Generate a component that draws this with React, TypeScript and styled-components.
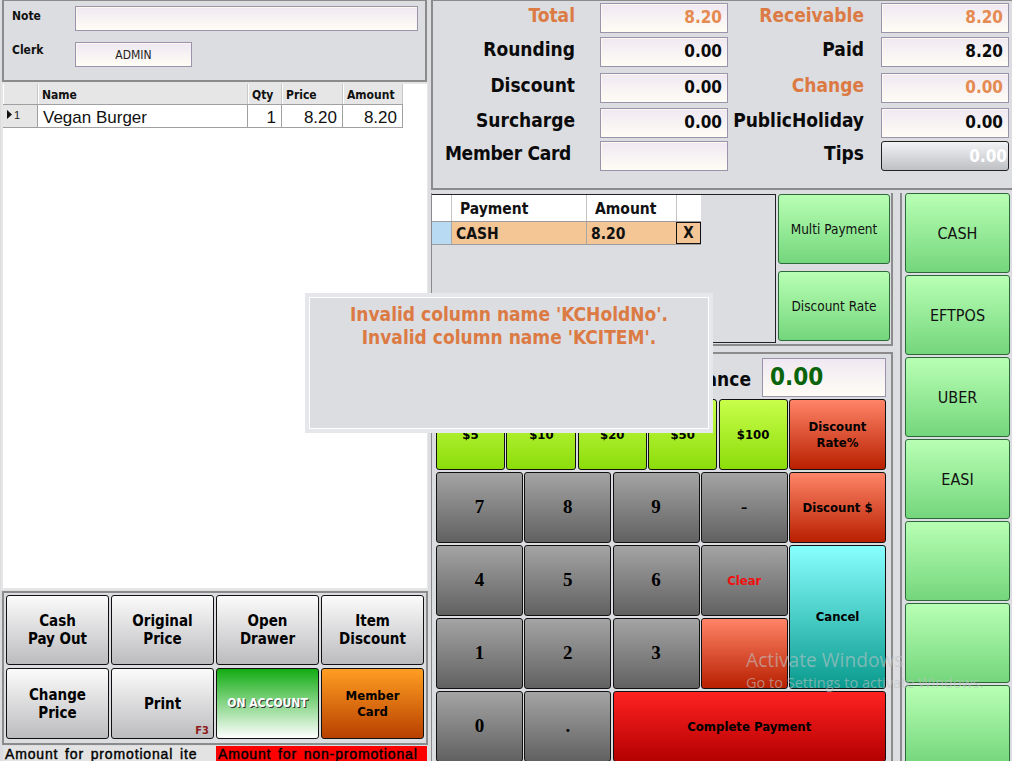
import React from "react";
import styled, { createGlobalStyle } from "styled-components";

const FONT = `"DejaVu Sans Condensed", "DejaVu Sans", sans-serif`;

const Global = createGlobalStyle`
  html, body { margin: 0; padding: 0; background: #fff; }
  body { font-family: ${FONT}; }
  * { box-sizing: border-box; }
`;

const Page = styled.div`
  position: relative;
  width: 1012px;
  height: 761px;
  overflow: hidden;
  display: grid;
  grid-template-columns: 429px 583px;
  background: #fff;
`;

const LeftColumn = styled.div`
  display: flex;
  flex-direction: column;
  height: 761px;
  background: #dcdde1;
`;

const NotePanel = styled.div`
  height: 82px;
  margin-left: 2px;
  margin-right: 2px;
  border: 2px solid #8b8b8b;
  border-top: 1px solid #8b8b8b;
  background: #dcdde1;
  display: grid;
  grid-template-columns: 69px 343px;
  grid-template-rows: 25px 25px;
  row-gap: 11px;
  padding: 5px 8px 0 2px;
`;

const FieldLabel = styled.div<{ $mt?: number }>`
  padding: 3px 0 0 6px;
  margin-top: ${(p) => p.$mt ?? 0}px;
  font-size: 12px;
  font-weight: 700;
  color: #111;
`;

const Field = styled.div<{ $w?: number }>`
  width: ${(p) => (p.$w ? `${p.$w}px` : "100%")};
  border: 1px solid #9a93ac;
  background: linear-gradient(#efe8f2, #fffdf5);
  box-shadow: inset 1px 1px 0 #fff8ee;
  display: flex;
  align-items: center;
  justify-content: center;
  font-size: 12px;
  color: #222;
`;

const OrderGrid = styled.div`
  flex: 1;
  margin: 0 0 0 1px;
  width: 427px;
  background: #fff;
  border: 2px solid #e6e6e6;
  border-right: 1px solid #e6e6e6;
`;

const OrderHeader = styled.div`
  display: grid;
  grid-template-columns: 35px 210px 34px 61px 60px;
  width: 400px;
  height: 21px;
  background: #e6e6e6;
  border-bottom: 1px solid #a0a0a0;
`;

const HeaderCell = styled.div`
  padding: 4px 0 0 3px;
  font-size: 12px;
  font-weight: 700;
  color: #111;
  border-left: 1px solid #fff;
  box-shadow: inset -1px 0 0 #c8c8c8;
  white-space: nowrap;
`;

const OrderRow = styled.div`
  display: grid;
  grid-template-columns: 35px 210px 34px 61px 60px;
  grid-template-rows: 22px;
  width: 400px;
  height: 23px;
  border-bottom: 1px solid #a0a0a0;
`;

const RowMarker = styled.div`
  background: #e6e6e6;
  border-right: 1px solid #a0a0a0;
  display: flex;
  align-items: center;
  padding: 0 0 3px 4px;
  gap: 2px;
  font-family: "Liberation Sans", sans-serif;
  font-size: 11px;
  color: #222;
`;

const Cell = styled.div<{ $right?: boolean }>`
  font-family: "Liberation Sans", sans-serif;
  font-size: 17px;
  line-height: 25px;
  height: 22px;
  overflow: hidden;
  color: #111;
  padding: 0 5px;
  text-align: ${(p) => (p.$right ? "right" : "left")};
  border-right: 1px solid #a0a0a0;
`;

const ActionPanel = styled.div`
  height: 154px;
  margin: 1px 1px 0 2px;
  border: 2px solid #8b8b8b;
  padding: 2px 2px 0 2px;
  display: grid;
  grid-template-columns: repeat(4, 103px);
  grid-template-rows: 70px 71px;
  column-gap: 2px;
  row-gap: 3px;
  background: #dcdde1;
`;

const Key = styled.div<{ $bg: string; $color?: string; $size?: number; $serif?: boolean }>`
  position: relative;
  display: flex;
  align-items: center;
  justify-content: center;
  text-align: center;
  border: 1px solid #111;
  border-radius: 3px;
  background: ${(p) => p.$bg};
  color: ${(p) => p.$color ?? "#000"};
  font-family: ${(p) => (p.$serif ? `"Liberation Serif", serif` : FONT)};
  font-size: ${(p) => p.$size ?? 13}px;
  font-weight: 700;
  line-height: 1.2;
`;

const GREY = "linear-gradient(#fbfbfb, #bcbcbf)";
const DARK = "linear-gradient(#a4a4a4, #616161)";
const LIME = "linear-gradient(#c8ff4a, #8cdc0a)";
const CORAL = "linear-gradient(#ff8468, #b82000)";
const MINT = "linear-gradient(#b8ffb4, #74d67c)";

const OnAccount = styled(Key)`
  color: #fff;
  text-shadow: 1px 1px 0 #333;
  font-size: 12px;
`;

const FKey = styled.span`
  position: absolute;
  right: 4px;
  bottom: 1px;
  font-size: 11px;
  color: #8c1a1a;
`;

const StatusBar = styled.div`
  margin: 1px 1px 0 3px;
  height: 15px;
  display: grid;
  grid-template-columns: 213px 211px;
  font-family: "Liberation Sans", sans-serif;
  font-size: 14px;
  line-height: 16px;
  white-space: nowrap;
  overflow: hidden;
  background: #e3e3e3;
`;

const StatusCell = styled.div<{ $bg?: string }>`
  overflow: hidden;
  padding-left: 2px;
  letter-spacing: 0.85px;
  word-spacing: 2px;
  -webkit-text-stroke: 0.4px #000;
  background: ${(p) => p.$bg ?? "#e3e3e3"};
  color: #000;
`;

const RightColumn = styled.div`
  display: flex;
  flex-direction: column;
  height: 761px;
  background: #dcdde1;
  padding-left: 2px;
`;

const TotalsPanel = styled.div`
  height: 190px;
  border: 2px solid #8b8b8b;
  border-right: none;
  border-top: 1px solid #8b8b8b;
  display: grid;
  grid-template-columns: 167px 128px 153px 128px;
  column-gap: 0;
  grid-template-rows: 30px 30px 30px 30px 30px;
  padding-top: 2px;
  align-content: start;
  row-gap: 4px;
  background: #dcdde1;
`;

const TotalLabel = styled.div<{ $accent?: boolean; $mt?: number }>`
  font-size: 19px;
  font-weight: 700;
  color: ${(p) => (p.$accent ? "#dc7a44" : "#0a0a0a")};
  text-align: right;
  padding-right: 25px;
  white-space: nowrap;
  line-height: 24px;
  margin-top: ${(p) => p.$mt ?? 0}px;
`;

const SecondLabel = styled(TotalLabel)`
  padding-right: 17px;
`;

const MemberLabel = styled(TotalLabel)`
  padding-right: 29px;
  letter-spacing: -0.3px;
`;

const TotalValue = styled.div<{ $accent?: boolean; $mt?: number }>`
  border: 1px solid #9a93ac;
  background: linear-gradient(#efe8f2, #fffdf5);
  box-shadow: inset 1px 1px 0 #fff8ee;
  color: ${(p) => (p.$accent ? "#e58a50" : "#0a0a0a")};
  font-size: 17px;
  font-weight: 700;
  text-align: right;
  line-height: 27px;
  padding-right: 5px;
  margin-top: ${(p) => p.$mt ?? 0}px;
  height: 30px;
`;

const TipsValue = styled.div<{ $mt?: number }>`
  border: 1px solid #222;
  border-radius: 3px;
  background: linear-gradient(#f2f3f5, #bfc0c4);
  color: #fff;
  font-size: 17px;
  font-weight: 700;
  text-align: right;
  line-height: 28px;
  padding-right: 1px;
  height: 30px;
  margin-top: ${(p) => p.$mt ?? 0}px;
`;

const Lower = styled.div`
  display: grid;
  grid-template-columns: 462px 7px 1fr;
  padding-top: 3px;
  flex: 1;
  min-height: 0;
`;

const MidStack = styled.div`
  display: flex;
  flex-direction: column;
`;

const PaymentPanel = styled.div`
  height: 153px;
  border: 2px solid #8b8b8b;
  border-left: 1px solid #8b8b8b;
  border-top: none;
  display: grid;
  grid-template-columns: 344px 112px;
  column-gap: 2px;
  padding-top: 1px;
`;

const PaymentBox = styled.div`
  border: 1px solid #222;
  border-left: none;
  height: 149px;
`;

const PaymentHeader = styled.div`
  display: grid;
  grid-template-columns: 19px 135px 90px 25px;
  grid-template-rows: 26px;
  width: 269px;
  height: 26px;
  background: #fff;
  font-size: 15.5px;
  font-weight: 700;
  color: #111;
  line-height: 28px;
`;

const PayHeadCell = styled.div`
  padding-left: 8px;
  height: 26px;
  overflow: hidden;
  border-left: 1px solid #c4c4c4;
`;

const PaymentRow = styled.div`
  display: grid;
  grid-template-columns: 19px 135px 90px 25px;
  grid-template-rows: 22px;
  width: 269px;
  height: 24px;
  background: #f4c595;
  border-top: 1px solid #9c9c9c;
  border-bottom: 1px solid #9c9c9c;
  font-size: 15.5px;
  font-weight: 700;
  color: #111;
  line-height: 24px;
`;

const PayMarker = styled.div`
  background: #b8daf2;
`;

const PayCell = styled.div`
  padding-left: 4px;
  height: 22px;
  overflow: hidden;
  border-left: 1px solid #a8a8a8;
`;

const RemoveCell = styled.div`
  border: 1px solid #111;
  text-align: center;
  font-size: 15px;
  height: 22px;
  line-height: 21px;
  overflow: hidden;
`;

const SideButtons = styled.div`
  display: grid;
  grid-template-rows: 70px 70px;
  row-gap: 7px;
`;

const SoftKey = styled(Key)`
  font-weight: 400;
  font-size: 13.5px;
  color: #111;
  border: 1px solid #2c6a3a;
`;

const KeypadPanel = styled.div`
  margin-top: 6px;
  flex: 1;
  border: 2px solid #8b8b8b;
  border-left: 1px solid #8b8b8b;
  border-bottom: none;
  padding: 3px 5px 0 4px;
`;

const BalanceRow = styled.div`
  display: flex;
  justify-content: flex-end;
  align-items: center;
  height: 40px;
  gap: 11px;
`;

const BalanceLabel = styled.div`
  font-size: 19px;
  font-weight: 700;
  color: #0a0a0a;
  padding-top: 3px;
`;

const BalanceValue = styled.div`
  width: 124px;
  height: 39px;
  border: 1px solid #9a93ac;
  background: linear-gradient(#efe8f2, #fffdf5);
  color: #0a640a;
  font-size: 24px;
  font-weight: 700;
  line-height: 37px;
  padding-left: 7px;
`;

const PresetRow = styled.div`
  display: grid;
  grid-template-columns: 69px 70px 69px 69px 69px 97px;
  column-gap: 1.4px;
  height: 71px;
  margin-top: 2px;
`;

const NumberGrid = styled.div`
  display: grid;
  grid-template-columns: 87px 87px 87px 87px 97px;
  grid-auto-rows: 71px;
  column-gap: 1.25px;
  row-gap: 2px;
  margin-top: 2px;
`;

const CancelKey = styled(Key)`
  grid-column: 5;
  grid-row: 2 / span 2;
`;

const CompleteKey = styled(Key)`
  grid-column: 3 / span 3;
`;

const Divider = styled.div`
  background: #dcdde1;
`;

const TenderColumn = styled.div`
  border-left: 2px solid #8b8b8b;
  padding: 0 2px 0 3px;
  display: grid;
  grid-auto-rows: 80px;
  row-gap: 2px;
  margin-bottom: -20px;
`;

const TenderKey = styled(Key)`
  font-weight: 400;
  font-size: 16px;
  color: #111;
  border: 1px solid #2c6a3a;
  padding-top: 2px;
`;

const ErrorDialog = styled.div`
  position: absolute;
  left: 305px;
  top: 293px;
  width: 408px;
  height: 140px;
  background: #dcdde1;
  border: 4px solid #e6e7ea;
  box-shadow: inset 0 0 0 1px #fff;
  padding: 6px 4px 0;
  text-align: center;
  color: #dc7a44;
  font-size: 19px;
  font-weight: 700;
  line-height: 23px;
`;

const Watermark = styled.div`
  position: absolute;
  left: 746px;
  top: 647px;
  font-family: "Open Sans", sans-serif;
  color: rgba(190, 195, 195, 0.6);
  white-space: nowrap;
  pointer-events: none;
`;

const WatermarkTitle = styled.div`
  font-size: 19.2px;
  line-height: 26px;
`;

const WatermarkHint = styled.div`
  font-size: 14.5px;
  line-height: 20px;
`;

const Caret = () => (
  <svg width="5" height="9" viewBox="0 0 5 9">
    <path d="M0 0 L5 4.5 L0 9 Z" fill="#111" />
  </svg>
);

const actions = [
  ["Cash", "Pay Out"],
  ["Original", "Price"],
  ["Open", "Drawer"],
  ["Item", "Discount"],
  ["Change", "Price"],
];

const Lines = ({ lines }: { lines: string[] }) => (
  <span>
    {lines.map((l) => (
      <React.Fragment key={l}>
        {l}
        <br />
      </React.Fragment>
    ))}
  </span>
);

export default function App() {
  return (
    <Page>
      <Global />
      <LeftColumn>
        <NotePanel>
          <FieldLabel>Note</FieldLabel>
          <Field />
          <FieldLabel $mt={-2}>Clerk</FieldLabel>
          <Field $w={117}>ADMIN</Field>
        </NotePanel>
        <OrderGrid>
          <OrderHeader>
            <HeaderCell />
            <HeaderCell>Name</HeaderCell>
            <HeaderCell>Qty</HeaderCell>
            <HeaderCell>Price</HeaderCell>
            <HeaderCell>Amount</HeaderCell>
          </OrderHeader>
          <OrderRow>
            <RowMarker>
              <Caret />1
            </RowMarker>
            <Cell>Vegan Burger</Cell>
            <Cell $right>1</Cell>
            <Cell $right>8.20</Cell>
            <Cell $right>8.20</Cell>
          </OrderRow>
        </OrderGrid>
        <ActionPanel>
          {actions.map((a) => (
            <Key key={a.join()} $bg={GREY} $size={15}>
              <Lines lines={a} />
            </Key>
          ))}
          <Key $bg={GREY} $size={15}>
            Print
            <FKey>F3</FKey>
          </Key>
          <OnAccount $bg="linear-gradient(#12ac12, #ffffff)">ON ACCOUNT</OnAccount>
          <Key $bg="linear-gradient(#ff9e22, #b84000)">
            <Lines lines={["Member", "Card"]} />
          </Key>
        </ActionPanel>
        <StatusBar>
          <StatusCell>Amount for promotional ite</StatusCell>
          <StatusCell $bg="#ff0000">Amount for non-promotional</StatusCell>
        </StatusBar>
      </LeftColumn>

      <RightColumn>
        <TotalsPanel>
          <TotalLabel $accent>Total</TotalLabel>
          <TotalValue $accent>8.20</TotalValue>
          <SecondLabel $accent>Receivable</SecondLabel>
          <TotalValue $accent>8.20</TotalValue>

          <TotalLabel>Rounding</TotalLabel>
          <TotalValue>0.00</TotalValue>
          <SecondLabel>Paid</SecondLabel>
          <TotalValue>8.20</TotalValue>

          <TotalLabel $mt={2}>Discount</TotalLabel>
          <TotalValue $mt={2}>0.00</TotalValue>
          <SecondLabel $accent $mt={2}>Change</SecondLabel>
          <TotalValue $accent $mt={2}>0.00</TotalValue>

          <TotalLabel $mt={3}>Surcharge</TotalLabel>
          <TotalValue $mt={3}>0.00</TotalValue>
          <SecondLabel $mt={3}>PublicHoliday</SecondLabel>
          <TotalValue $mt={3}>0.00</TotalValue>

          <MemberLabel $mt={2}>Member Card</MemberLabel>
          <TotalValue $mt={2} />
          <SecondLabel $mt={2}>Tips</SecondLabel>
          <TipsValue $mt={2}>0.00</TipsValue>
        </TotalsPanel>

        <Lower>
          <MidStack>
            <PaymentPanel>
              <PaymentBox>
                <PaymentHeader>
                  <div />
                  <PayHeadCell>Payment</PayHeadCell>
                  <PayHeadCell>Amount</PayHeadCell>
                  <PayHeadCell />
                </PaymentHeader>
                <PaymentRow>
                  <PayMarker />
                  <PayCell>CASH</PayCell>
                  <PayCell>8.20</PayCell>
                  <RemoveCell>X</RemoveCell>
                </PaymentRow>
              </PaymentBox>
              <SideButtons>
                <SoftKey $bg={MINT}>Multi Payment</SoftKey>
                <SoftKey $bg={MINT}>Discount Rate</SoftKey>
              </SideButtons>
            </PaymentPanel>

            <KeypadPanel>
              <BalanceRow>
                <BalanceLabel>Balance</BalanceLabel>
                <BalanceValue>0.00</BalanceValue>
              </BalanceRow>
              <PresetRow>
                {["$5", "$10", "$20", "$50", "$100"].map((t) => (
                  <Key key={t} $bg={LIME}>{t}</Key>
                ))}
                <Key $bg={CORAL}>
                  <Lines lines={["Discount", "Rate%"]} />
                </Key>
              </PresetRow>
              <NumberGrid>
                {["7", "8", "9", "-"].map((t) => (
                  <Key key={t} $bg={DARK} $size={19} $serif>{t}</Key>
                ))}
                <Key $bg={CORAL}>Discount $</Key>
                {["4", "5", "6"].map((t) => (
                  <Key key={t} $bg={DARK} $size={19} $serif>{t}</Key>
                ))}
                <Key $bg={DARK} $color="#f01010">Clear</Key>
                <CancelKey $bg="linear-gradient(#88ffff, #0a9a8e)">Cancel</CancelKey>
                {["1", "2", "3"].map((t) => (
                  <Key key={t} $bg={DARK} $size={19} $serif>{t}</Key>
                ))}
                <Key $bg={CORAL} />
                {["0", "."].map((t) => (
                  <Key key={t} $bg={DARK} $size={19} $serif>{t}</Key>
                ))}
                <CompleteKey $bg="linear-gradient(#ff2222, #b40000)">Complete Payment</CompleteKey>
              </NumberGrid>
            </KeypadPanel>
          </MidStack>
          <Divider />
          <TenderColumn>
            {["CASH", "EFTPOS", "UBER", "EASI", "", "", ""].map((t, i) => (
              <TenderKey key={i} $bg={MINT}>{t}</TenderKey>
            ))}
          </TenderColumn>
        </Lower>
      </RightColumn>

      <ErrorDialog>
        Invalid column name 'KCHoldNo'.
        <br />
        Invalid column name 'KCITEM'.
      </ErrorDialog>
      <Watermark>
        <WatermarkTitle>Activate Windows</WatermarkTitle>
        <WatermarkHint>Go to Settings to activate Windows.</WatermarkHint>
      </Watermark>
    </Page>
  );
}
